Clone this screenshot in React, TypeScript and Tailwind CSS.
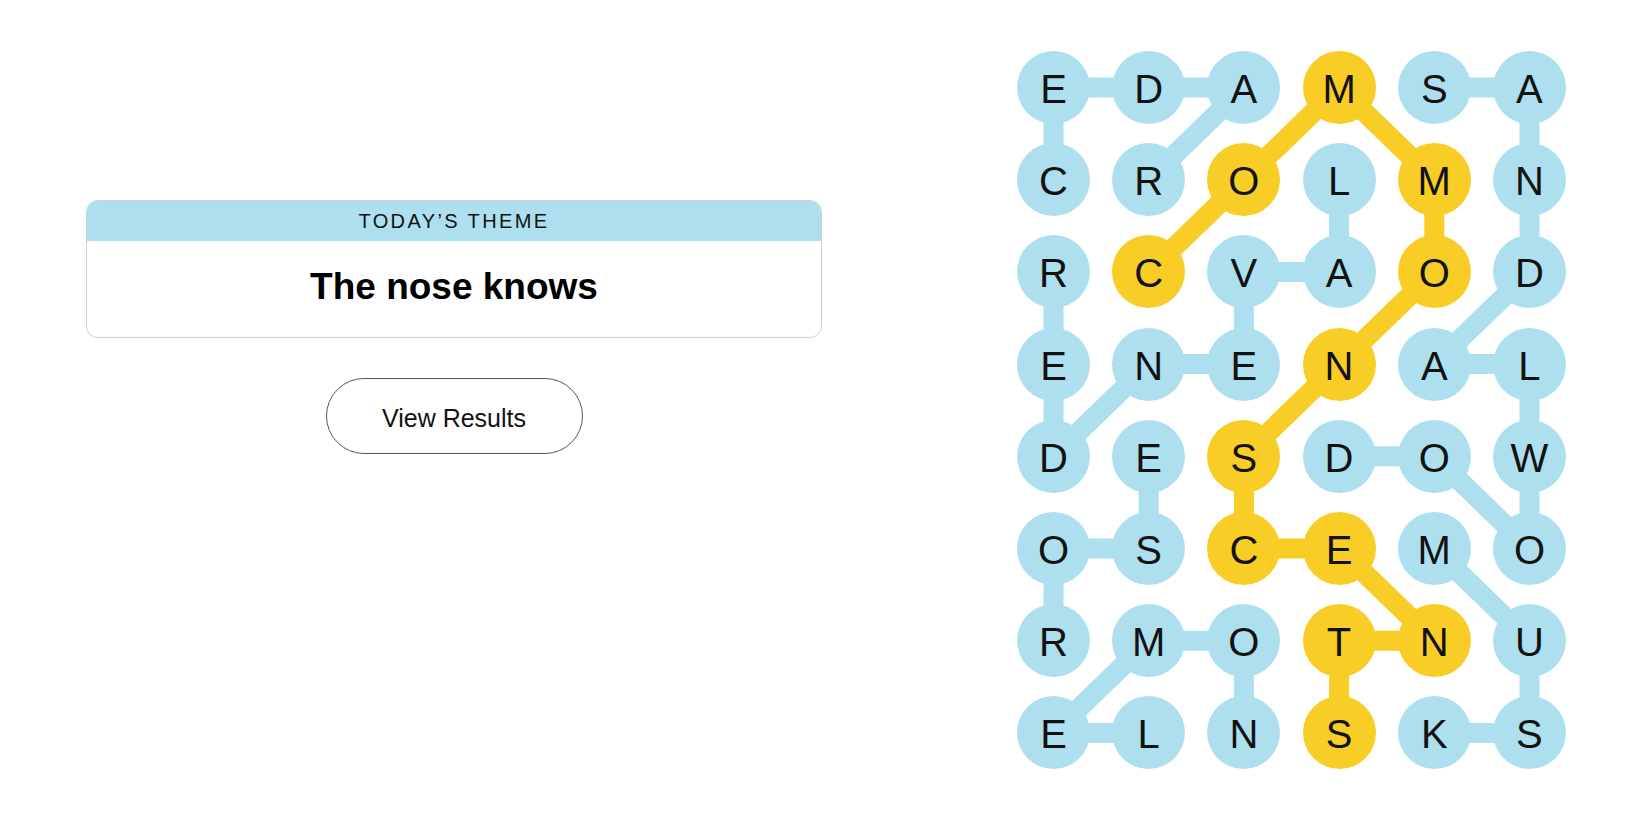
import React from 'react';

// Board letters, row by row
const GRID = [
  'EDAMSA',
  'CROLMN',
  'RCVAOD',
  'ENENAL',
  'DESDOW',
  'OSCEMO',
  'RMOTNU',
  'ELNSKS',
];

type Cell = [number, number];

// found words as [row, col] paths
const WORDS: { path: Cell[]; spangram?: boolean }[] = [
  // CEDAR
  { path: [[1, 0], [0, 0], [0, 1], [0, 2], [1, 1]] },
  // SANDALWOOD
  { path: [[0, 4], [0, 5], [1, 5], [2, 5], [3, 4], [3, 5], [4, 5], [5, 5], [4, 4], [4, 3]] },
  // LAVENDER
  { path: [[1, 3], [2, 3], [2, 2], [3, 2], [3, 1], [4, 0], [3, 0], [2, 0]] },
  // ROSE
  { path: [[6, 0], [5, 0], [5, 1], [4, 1]] },
  // LEMON
  { path: [[7, 1], [7, 0], [6, 1], [6, 2], [7, 2]] },
  // MUSK
  { path: [[5, 4], [6, 5], [7, 5], [7, 4]] },
  // COMMONSCENTS
  {
    spangram: true,
    path: [[2, 1], [1, 2], [0, 3], [1, 4], [2, 4], [3, 3], [4, 2], [5, 2], [5, 3], [6, 4], [6, 3], [7, 3]],
  },
];

const SIZE = 73;
const STEP_X = 95.2;
const STEP_Y = 92.2;
const BLUE = '#aedfee';
const YELLOW = '#f8cd26';

const spangramCells = new Set(
  WORDS.filter((w) => w.spangram).flatMap((w) => w.path.map(([r, c]) => `${r}-${c}`))
);

const center = ([r, c]: Cell) => ({ x: SIZE / 2 + c * STEP_X, y: SIZE / 2 + r * STEP_Y });

const Board = () => {
  const width = SIZE + 5 * STEP_X;
  const height = SIZE + 7 * STEP_Y;

  return (
    <div className="relative" style={{ width, height }}>
      <svg className="absolute inset-0" width={width} height={height} aria-hidden>
        {WORDS.map((word, i) =>
          word.path.slice(1).map((cell, j) => {
            const a = center(word.path[j]);
            const b = center(cell);
            return (
              <line
                key={`${i}-${j}`}
                x1={a.x}
                y1={a.y}
                x2={b.x}
                y2={b.y}
                stroke={word.spangram ? YELLOW : BLUE}
                strokeWidth={20}
              />
            );
          })
        )}
      </svg>
      <div className="relative grid grid-cols-[repeat(6,73px)] gap-x-[22.2px] gap-y-[19.2px]">
        {GRID.map((row, r) =>
          row.split('').map((letter, c) => (
            <button
              key={`${r}-${c}`}
              className={`flex h-[73px] w-[73px] items-center justify-center rounded-full pt-[3px] text-[40px] leading-none text-[#121212] ${
                spangramCells.has(`${r}-${c}`) ? 'bg-[#f8cd26]' : 'bg-[#aedfee]'
              }`}
            >
              {letter}
            </button>
          ))
        )}
      </div>
    </div>
  );
};

export default function App() {
  return (
    <div className="flex h-[825px] w-full bg-white font-['Liberation_Sans',Arial,sans-serif]">
      <div className="flex w-[908px] shrink-0 flex-col items-center pt-[200px]">
        <section className="w-[736px] overflow-hidden rounded-[12px] border border-[#cfcfcf]">
          <h2 className="flex h-[40px] items-center justify-center bg-[#aedfee] text-[20px] tracking-[2.4px] text-[#121212]">
            TODAY’S THEME
          </h2>
          <p className="flex h-[96px] items-center justify-center pb-[4px] text-[37px] font-bold text-black">
            The nose knows
          </p>
        </section>
        <button className="mt-[40px] h-[76px] w-[257px] rounded-full border border-[#555] pt-[5px] text-[25px] text-[#121212]">
          View Results
        </button>
      </div>
      <div className="pl-[109px] pt-[51px]">
        <Board />
      </div>
    </div>
  );
}
